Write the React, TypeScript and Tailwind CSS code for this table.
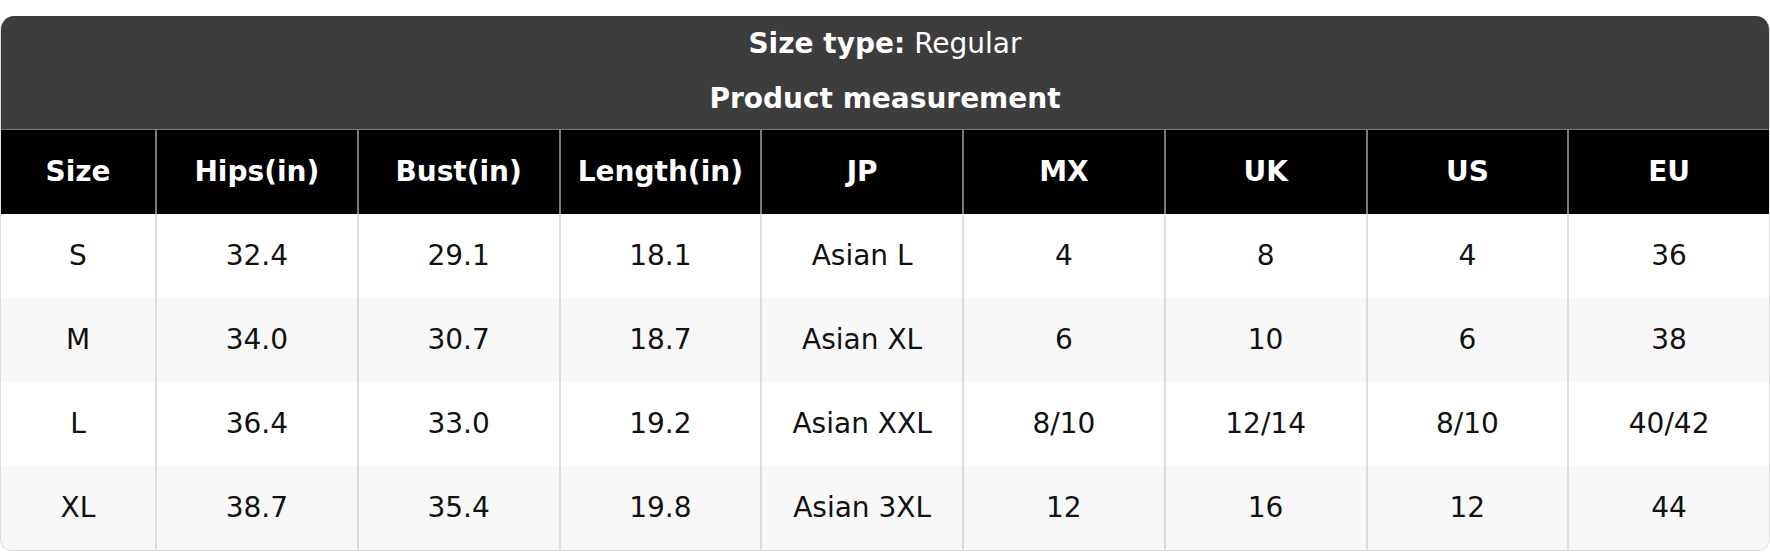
const headers = ['Size', 'Hips(in)', 'Bust(in)', 'Length(in)', 'JP', 'MX', 'UK', 'US', 'EU'];

const rows = [
  ['S', '32.4', '29.1', '18.1', 'Asian L', '4', '8', '4', '36'],
  ['M', '34.0', '30.7', '18.7', 'Asian XL', '6', '10', '6', '38'],
  ['L', '36.4', '33.0', '19.2', 'Asian XXL', '8/10', '12/14', '8/10', '40/42'],
  ['XL', '38.7', '35.4', '19.8', 'Asian 3XL', '12', '16', '12', '44'],
];

const App = () => {
  return (
    <div className="bg-white pt-4 w-[1770px] font-['DejaVu_Sans',sans-serif] text-[28px]">
      <div className="rounded-t-[14px] rounded-b-[12px] overflow-hidden border border-t-0 border-[#dddddd]">
        {/* Title block */}
        <div className="bg-[#3d3d3d] text-white flex flex-col pb-[3px]">
          <div className="h-[55px] flex items-center justify-center">
            <span className="font-bold">Size type:</span>
            <span className="ml-[9px]">Regular</span>
          </div>
          <div className="h-[55px] flex items-center justify-center font-bold">Product measurement</div>
        </div>

        {/* Header row */}
        <div className="grid grid-cols-[154px_repeat(8,1fr)] bg-black border-t border-[#7a7a7a]">
          {headers.map((h, i) => (
            <div
              key={h}
              className={`h-[84px] flex items-center justify-center font-bold text-white ${i > 0 ? 'border-l-2 border-[#7a7a7a]' : ''}`}
            >
              {h}
            </div>
          ))}
        </div>

        {/* Body rows */}
        {rows.map((row, r) => (
          <div
            key={row[0]}
            className={`grid grid-cols-[154px_repeat(8,1fr)] ${r % 2 === 1 ? 'bg-[#f8f8f8]' : 'bg-white'}`}
          >
            {row.map((cell, i) => (
              <div
                key={i}
                className={`h-[84px] flex items-center justify-center text-[#111111] ${i > 0 ? 'border-l-2 border-[#dddddd]' : ''}`}
              >
                {cell}
              </div>
            ))}
          </div>
        ))}
      </div>
    </div>
  );
};

export default App;
